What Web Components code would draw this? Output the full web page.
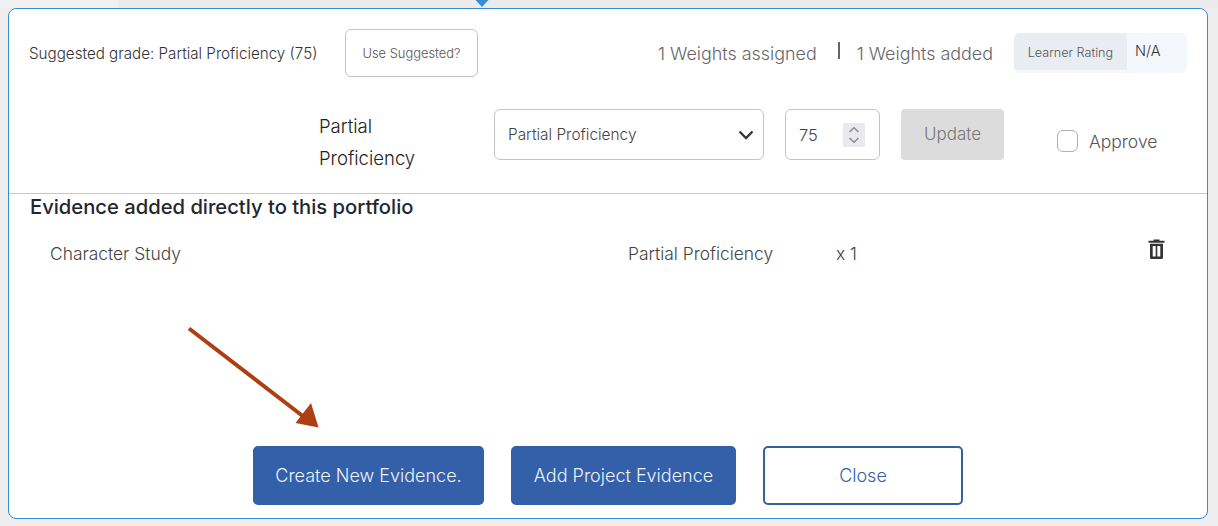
<!DOCTYPE html>
<html lang="en">
<head>
<meta charset="utf-8">
<title>Portfolio evidence</title>
<style>
    html, body { margin: 0; height: 526px; overflow: hidden; }
    body {
        background: linear-gradient(to right, #f0f0f0 118px, #ebebeb 118px) 0 0 / 100% 8px no-repeat, #eeeeee;
        font-family: Inter, "Liberation Sans", sans-serif;
        font-weight: 300;
        color: #222;
    }
</style>
</head>
<body>
<evidence-panel>
    <grade-summary slot="summary"></grade-summary>
    <grade-form slot="form"></grade-form>
    <evidence-list slot="list" heading="Evidence added directly to this portfolio">
        <evidence-row name="Character Study" grade="Partial Proficiency" weight="x 1"></evidence-row>
    </evidence-list>
    <panel-actions slot="actions"></panel-actions>
</evidence-panel>

<script>
/**
 * Create an open shadow root with the given markup.
 *
 * @param {HTMLElement} el The host.
 * @param {string} html The shadow markup.
 * @returns void
 */
function _render(el, html) {
    el.attachShadow({ mode: 'open' }).innerHTML = html;
}

class EvidencePanel extends HTMLElement {
    connectedCallback() {
        _render(this, `
            <style>
                :host { display: block; padding: 8px 10px 7px 8px; height: 511px; }
                .box {
                    position: relative;
                    box-sizing: border-box;
                    height: 100%;
                    background: #fff;
                    border: 1px solid #3a8bd6;
                    border-radius: 8px;
                    display: flex;
                    flex-direction: column;
                }
                .caret { position: absolute; left: 465px; top: -9px; }
                .arrow { position: absolute; left: 175px; top: 315px; }
                .foot { margin-top: auto; }
            </style>
            <div class="box">
                <svg class="caret" width="16" height="8" viewBox="0 0 16 8"><path d="M1.500 0h13L8 7z" fill="#3a8bd6"/></svg>
                <slot name="summary"></slot>
                <slot name="form"></slot>
                <slot name="list"></slot>
                <div class="foot"><slot name="actions"></slot></div>
                <svg class="arrow" width="140" height="110" viewBox="0 0 140 110">
                    <path d="M5 4.500L120 93" stroke="#ad3f12" stroke-width="4" fill="none"/>
                    <path d="M134.500 103.500L111.500 99L127 79z" fill="#ad3f12"/>
                </svg>
            </div>
        `);
    }
}

class GradeSummary extends HTMLElement {
    connectedCallback() {
        _render(this, `
            <style>
                :host { display: flex; align-items: center; height: 48px; margin-top: 20px; padding-left: 20px; color: #555; }
                .grade { font-size: 15.200px; font-weight: 300; color: #333; width: 316px; white-space: nowrap; }
                button {
                    box-sizing: border-box;
                    width: 133px;
                    height: 48px;
                    background: #fff;
                    border: 1px solid #c4c4c4;
                    border-radius: 6px;
                    font: 300 12.900px Inter, "Liberation Sans", sans-serif;
                    color: #555;
                    padding: 0;
                }
                .weights { margin-left: 180px; font-size: 17.900px; white-space: nowrap; display: flex; align-items: center; color: #666; padding-top: 1px; }
                .sep { width: 2px; height: 17px; background: #666; margin: -7px 17px 0 21px; }
                .rating {
                    margin-left: 21px;
                    width: 173px;
                    height: 40px;
                    display: flex;
                    background: #f4f7fd;
                    border-radius: 6px;
                    overflow: hidden;
                    font-size: 14.500px;
                    color: #333;
                }
                .rating b { font-weight: 300; font-size: 12.600px; width: 113px; height: 36px; padding-top: 1px; background: #e9ecf1; display: flex; align-items: center; justify-content: center; color: #555; }
                .rating span { padding: 9px 0 0 8px; }
            </style>
            <span class="grade">Suggested grade: Partial Proficiency (75)</span>
            <button>Use Suggested?</button>
            <div class="weights"><span>1 Weights assigned</span><i class="sep"></i><span>1 Weights added</span></div>
            <div class="rating"><b>Learner Rating</b><span>N/A</span></div>
        `);
    }
}

class GradeForm extends HTMLElement {
    connectedCallback() {
        _render(this, `
            <style>
                :host { display: flex; align-items: flex-start; height: 84px; margin-top: 32px; padding-left: 310px; font-size: 14px; }
                .label { width: 175px; padding-right: 60px; box-sizing: border-box; font-size: 18.500px; line-height: 32px; color: #222; margin-top: 1px; }
                .field {
                    box-sizing: border-box;
                    height: 51px;
                    border: 1px solid #c4c4c4;
                    border-radius: 6px;
                    display: flex;
                    align-items: center;
                    font-size: 15.400px;
                    color: #444;
                }
                .select { width: 270px; padding: 0 9px 0 13px; justify-content: space-between; }
                .number { width: 95px; margin-left: 21px; padding: 0 14px 0 13px; justify-content: space-between; font-size: 16.500px; }
                .spin { width: 22px; height: 24px; background: #e9e9ef; display: block; }
                .update {
                    box-sizing: border-box;
                    width: 103px;
                    height: 51px;
                    margin-left: 21px;
                    border: 0;
                    border-radius: 4px;
                    background: #dcdcdc;
                    color: #777;
                    font: 300 17px Inter, "Liberation Sans", sans-serif;
                    padding: 0 0 2px;
                }
                .approve { display: flex; align-items: center; margin: 21px 0 0 53px; font-size: 17.500px; color: #555; }
                .check { box-sizing: border-box; width: 21px; height: 22px; border: 1px solid #aab0b8; border-radius: 6px; margin-right: 11px; }
            </style>
            <div class="label">Partial Proficiency</div>
            <div class="field select">
                <span>Partial Proficiency</span>
                <svg width="16" height="10" viewBox="0 0 16 10"><path d="M1.500 1.500L8 8l6.500-6.500" fill="none" stroke="#333" stroke-width="2.300"/></svg>
            </div>
            <div class="field number">
                <span>75</span>
                <svg class="spin" viewBox="0 0 22 24"><path d="M6.500 9L11 4.800 15.500 9M6.500 15L11 19.200 15.500 15" fill="none" stroke="#8a8a90" stroke-width="1.500"/></svg>
            </div>
            <button class="update">Update</button>
            <label class="approve"><span class="check"></span>Approve</label>
        `);
    }
}

class EvidenceList extends HTMLElement {
    connectedCallback() {
        _render(this, `
            <style>
                :host { display: block; border-top: 1px solid #c8c8c8; }
                h2 { margin: 0; padding: 0 0 0 21px; font-size: 20.200px; font-weight: 500; line-height: 26px; color: #23272c; white-space: nowrap; }
            </style>
            <h2>${this.getAttribute('heading')}</h2>
            <slot></slot>
        `);
    }
}

class EvidenceRow extends HTMLElement {
    connectedCallback() {
        _render(this, `
            <style>
                :host { display: flex; align-items: center; height: 40px; margin-top: 13px; padding-left: 41px; font-size: 17.400px; color: #444; }
                .name { width: 578px; }
                .grade { width: 208px; }
                .weight { width: 312px; }
                svg { margin-top: -8px; }
            </style>
            <span class="name">${this.getAttribute('name')}</span>
            <span class="grade">${this.getAttribute('grade')}</span>
            <span class="weight">${this.getAttribute('weight')}</span>
            <svg width="17" height="20" viewBox="0 0 17 20">
                <path d="M0.500 1.800h16v2h-16zM5.500 0.500h6v2h-6z" fill="#333"/>
                <path fill-rule="evenodd" d="M2 4.800h13v13.700a1.500 1.500 0 0 1-1.500 1.500h-10A1.500 1.500 0 0 1 2 18.500zM4.700 7v10.500h3V7zM9.300 7v10.500h3V7z" fill="#333"/>
            </svg>
        `);
    }
}

class PanelActions extends HTMLElement {
    connectedCallback() {
        _render(this, `
            <style>
                :host { display: flex; gap: 27px; padding: 0 0 13px 244px; }
                button {
                    box-sizing: border-box;
                    height: 59px;
                    border: 2px solid #3360a8;
                    border-radius: 5px;
                    background: #3360a8;
                    color: #eef2fa;
                    font: 300 18px Inter, "Liberation Sans", sans-serif;
                    padding: 0;
                }
                .outline { background: #fff; color: #3360a8; }
            </style>
            <button style="width:231px">Create New Evidence.</button>
            <button style="width:225px">Add Project Evidence</button>
            <button class="outline" style="width:200px">Close</button>
        `);
    }
}

customElements.define('evidence-panel', EvidencePanel);
customElements.define('grade-summary', GradeSummary);
customElements.define('grade-form', GradeForm);
customElements.define('evidence-list', EvidenceList);
customElements.define('evidence-row', EvidenceRow);
customElements.define('panel-actions', PanelActions);
</script>
</body>
</html>
